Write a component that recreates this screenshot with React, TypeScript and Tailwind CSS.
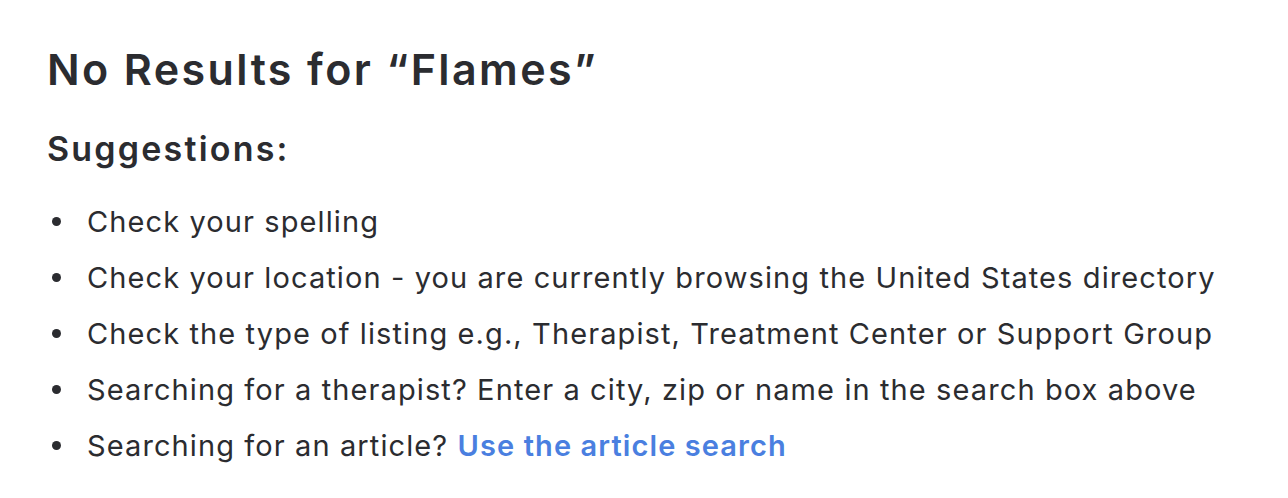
import React from 'react';

const suggestions = [
  'Check your spelling',
  'Check your location - you are currently browsing the United States directory',
  'Check the type of listing e.g., Therapist, Treatment Center or Support Group',
  'Searching for a therapist? Enter a city, zip or name in the search box above',
];

const Bullet: React.FC<{ children: React.ReactNode }> = ({ children }) => (
  <li className="flex items-center">
    <span className="mb-[2px] ml-[5px] mr-[26px] h-[9px] w-[9px] shrink-0 rounded-full bg-[#2b2c30]"></span>
    <span>{children}</span>
  </li>
);

const App: React.FC = () => {
  return (
    <div className="min-h-[498px] w-full bg-white px-[47px] pt-[43px] font-['Inter','Liberation_Sans',sans-serif] text-[#2b2c30]">
      <h1 className="text-[43px] font-semibold leading-[52px] tracking-[2.4px]">No Results for “Flames”</h1>
      <h2 className="mt-[34px] text-[34px] font-semibold leading-[40px] tracking-[2.2px]">Suggestions:</h2>
      <ul className="mt-[35px] flex flex-col gap-[20px] text-[29px] leading-[36px] tracking-[1.1px]">
        {suggestions.map((s) => (
          <Bullet key={s}>{s}</Bullet>
        ))}
        <Bullet>
          Searching for an article?{' '}
          <a href="#" className="font-semibold text-[#4a7fe0]">Use the article search</a>
        </Bullet>
      </ul>
    </div>
  );
};

export default App;
